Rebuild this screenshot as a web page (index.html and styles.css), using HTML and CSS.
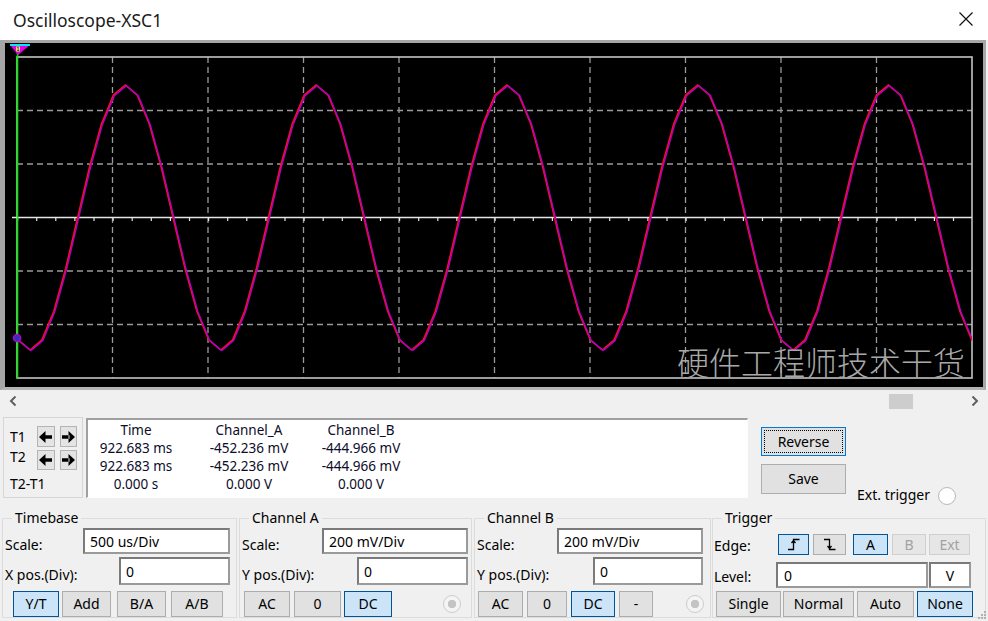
FILE: index.html
```html
<!DOCTYPE html>
<html>
<head>
<meta charset="utf-8">
<title>Oscilloscope-XSC1</title>
<link rel="stylesheet" href="styles.css">
</head>
<body>
<div class="window">
  <div class="titlebar">
    <span class="title">Oscilloscope-XSC1</span>
    <svg class="close" width="16" height="16" viewBox="0 0 16 16"><path d="M1.5 1.5L14.5 14.5M14.5 1.5L1.5 14.5" stroke="#111" stroke-width="1.2" fill="none"/></svg>
  </div>

  <div class="scope">
    <svg class="screen" width="978" height="344" viewBox="5 43 978 344">
      <defs>
        <clipPath id="clip"><rect x="17" y="50" width="955" height="330"/></clipPath>
        <path id="period" d="M0 350 L11.92 339.9 L23.84 311.2 L35.77 268.2 L47.69 217.5 L59.61 166.8 L71.53 123.8 L83.45 95.1 L95.38 85 L107.3 95.1 L119.22 123.8 L131.14 166.8 L143.06 217.5 L154.98 268.2 L166.91 311.2 L178.83 339.9 L190.75 350"/>
      </defs>
      <rect x="5" y="43" width="978" height="344" fill="#000"/>
      <g stroke="#9a9a9a" stroke-width="1.3" stroke-dasharray="6 4" fill="none">
        <path d="M112.5 57V378M208 57V378M303.5 57V378M399 57V378M494.5 57V378M590 57V378M685.5 57V378M781 57V378M876.5 57V378"/>
        <path d="M17 110.5H972M17 164H972M17 271H972M17 324.5H972"/>
      </g>
      <rect x="17" y="57" width="955" height="321" fill="none" stroke="#c4c4c4" stroke-width="1.6"/>
      <path d="M12 217.5H972" stroke="#e6e6e6" stroke-width="1.6"/>
      <path d="M17 219.5H972" stroke="#e6e6e6" stroke-width="3" stroke-dasharray="1.2 17.9"/>
      <g clip-path="url(#clip)" fill="none">
        <g stroke="#ff1010" stroke-width="1.6">
          <use href="#period" x="-160.75"/><use href="#period" x="30"/><use href="#period" x="220.75"/><use href="#period" x="411.5"/><use href="#period" x="602.25"/><use href="#period" x="793"/><use href="#period" x="983.75"/>
        </g>
        <g stroke="#b000c4" stroke-width="1.4" transform="translate(0.9 0.6)">
          <use href="#period" x="-160.75"/><use href="#period" x="30"/><use href="#period" x="220.75"/><use href="#period" x="411.5"/><use href="#period" x="602.25"/><use href="#period" x="793"/><use href="#period" x="983.75"/>
        </g>
      </g>
      <path d="M17.5 52V378" stroke="#00ee00" stroke-width="1.6"/>
      <path d="M10 45H30L18 55Z" fill="#e000e0"/>
      <path d="M10 45H30" stroke="#00e8ff" stroke-width="2"/>
      <rect x="16" y="46.5" width="4" height="5" fill="#e8e080"/>
      <text x="18" y="51.3" font-size="5.5" text-anchor="middle" fill="#000" font-family="DejaVu Sans">1</text>
      <circle cx="17" cy="338" r="3.6" fill="#3030c0" stroke="#c000c0" stroke-width="1.4"/>
    </svg>
    <div class="watermark">硬件工程师技术干货</div>
  </div>

  <div class="hscroll">
    <svg class="chev" width="10" height="12" viewBox="0 0 10 12"><path d="M7.5 1.5L3 6L7.5 10.5" stroke="#606060" stroke-width="2" fill="none"/></svg>
    <div class="track"><div class="thumb"></div></div>
    <svg class="chev" width="10" height="12" viewBox="0 0 10 12"><path d="M2.5 1.5L7 6L2.5 10.5" stroke="#606060" stroke-width="2" fill="none"/></svg>
  </div>

  <div class="mid">
    <div class="tpanel">
      <div class="trow r1">
        <span class="tlabel">T1</span>
        <button class="abtn"><svg width="13" height="12" viewBox="0 0 13 12"><path d="M0 6L6.5 0V12Z M5.5 4.3H13V7.7H5.5Z" fill="#000"/></svg></button>
        <button class="abtn"><svg width="13" height="12" viewBox="0 0 13 12"><path d="M13 6L6.5 0V12Z M0 4.3H7.5V7.7H0Z" fill="#000"/></svg></button>
      </div>
      <div class="trow r2">
        <span class="tlabel up">T2</span>
        <button class="abtn"><svg width="13" height="12" viewBox="0 0 13 12"><path d="M0 6L6.5 0V12Z M5.5 4.3H13V7.7H5.5Z" fill="#000"/></svg></button>
        <button class="abtn"><svg width="13" height="12" viewBox="0 0 13 12"><path d="M13 6L6.5 0V12Z M0 4.3H7.5V7.7H0Z" fill="#000"/></svg></button>
      </div>
      <div class="tdiff">T2-T1</div>
    </div>

    <div class="readout">
      <div class="cell">Time</div><div class="cell">Channel_A</div><div class="cell">Channel_B</div>
      <div class="cell">922.683 ms</div><div class="cell">-452.236 mV</div><div class="cell">-444.966 mV</div>
      <div class="cell">922.683 ms</div><div class="cell">-452.236 mV</div><div class="cell">-444.966 mV</div>
      <div class="cell">0.000 s</div><div class="cell">0.000 V</div><div class="cell">0.000 V</div>
    </div>

    <div class="side">
      <div class="sidebtns">
        <button class="btn reverse">Reverse</button>
        <button class="btn save">Save</button>
      </div>
      <div class="ext">
        <span>Ext. trigger</span>
        <span class="radio white"></span>
      </div>
    </div>
  </div>

  <div class="controls">
    <fieldset class="group timebase">
      <legend>Timebase</legend>
      <div class="row r-scale"><span class="lbl">Scale:</span><div class="field w147">500 us/Div</div></div>
      <div class="row r-pos"><span class="lbl">X pos.(Div):</span><div class="field w111">0</div></div>
      <div class="row r-btns">
        <button class="btn on b-yt">Y/T</button>
        <button class="btn b-add">Add</button>
        <button class="btn b-ba">B/A</button>
        <button class="btn b-ab">A/B</button>
      </div>
    </fieldset>

    <fieldset class="group cha">
      <legend>Channel A</legend>
      <div class="row r-scale"><span class="lbl">Scale:</span><div class="field w146">200 mV/Div</div></div>
      <div class="row r-pos"><span class="lbl">Y pos.(Div):</span><div class="field w111">0</div></div>
      <div class="row r-btns">
        <button class="btn a-ac">AC</button>
        <button class="btn a-0">0</button>
        <button class="btn on a-dc">DC</button>
        <span class="radio dis a-radio"></span>
      </div>
    </fieldset>

    <fieldset class="group chb">
      <legend>Channel B</legend>
      <div class="row r-scale"><span class="lbl">Scale:</span><div class="field w146">200 mV/Div</div></div>
      <div class="row r-pos"><span class="lbl">Y pos.(Div):</span><div class="field w110">0</div></div>
      <div class="row r-btns">
        <button class="btn b-ac">AC</button>
        <button class="btn b-0">0</button>
        <button class="btn on b-dc">DC</button>
        <button class="btn b-minus">-</button>
        <span class="radio dis b-radio"></span>
      </div>
    </fieldset>

    <fieldset class="group trig">
      <legend>Trigger</legend>
      <div class="row t-edge">
        <span class="tl">Edge:</span>
        <button class="btn on e-rise"><svg width="14" height="13" viewBox="0 0 14 13"><path d="M1 11.5H6.5V1.5H12.5M4.5 5L6.5 2.5L8.5 5" stroke="#000" stroke-width="1.3" fill="none"/></svg></button>
        <button class="btn e-fall"><svg width="14" height="13" viewBox="0 0 14 13"><path d="M1 1.5H6.5V11.5H12.5M4.5 8L6.5 10.5L8.5 8" stroke="#000" stroke-width="1.3" fill="none"/></svg></button>
        <button class="btn on e-a">A</button>
        <button class="btn dis e-b">B</button>
        <button class="btn dis e-ext">Ext</button>
      </div>
      <div class="row t-level">
        <span class="tl lv">Level:</span>
        <div class="field w152 lvl">0</div>
        <div class="field w42 unit">V</div>
      </div>
      <div class="row t-btns">
        <button class="btn m-single">Single</button>
        <button class="btn m-normal">Normal</button>
        <button class="btn m-auto">Auto</button>
        <button class="btn on m-none">None</button>
      </div>
    </fieldset>
  </div>

  <svg class="grip" width="10" height="10" viewBox="0 0 10 10" fill="#b0b0b0">
    <rect x="7" y="1" width="2" height="2"/><rect x="4" y="4" width="2" height="2"/><rect x="7" y="4" width="2" height="2"/>
    <rect x="1" y="7" width="2" height="2"/><rect x="4" y="7" width="2" height="2"/><rect x="7" y="7" width="2" height="2"/>
  </svg>
</div>
</body>
</html>
```

FILE: styles.css
```css
* { box-sizing: border-box; }
html, body { margin: 0; padding: 0; }
body {
  width: 988px;
  height: 621px;
  overflow: hidden;
  background: #f0f0f0;
  font-family: "Noto Sans", "Open Sans", sans-serif;
  font-size: 14px;
  color: #000;
}
.window { position: relative; width: 988px; height: 621px; }

.titlebar {
  height: 40px;
  background: #fff;
  display: flex;
  align-items: center;
  justify-content: space-between;
  padding: 0 14px 0 13px;
}
.title { font-size: 17.5px; color: #1a1a1a; line-height: 20px; margin-top: -1px; }
.close { display: block; margin-top: -2px; }

.scope {
  position: relative;
  width: 986px;
  height: 350px;
  border-top: 3px solid #a6a6a6;
  border-left: 5px solid #a6a6a6;
  border-right: 3px solid #a6a6a6;
  border-bottom: 3px solid #b4b4b4;
  background: #000;
}
.screen { display: block; }
.watermark {
  position: absolute;
  left: 672px;
  top: 301px;
  font-family: "Noto Sans CJK SC", sans-serif;
  font-size: 32px;
  line-height: 34px;
  color: #a8a8a8;
  font-weight: 300;
  white-space: nowrap;
}

.hscroll {
  height: 22px;
  display: flex;
  align-items: center;
  padding: 0 8px 0 8px;
}
.chev { display: block; flex: none; }
.track { flex: 1; height: 15px; padding-left: 871px; }
.thumb { width: 24px; height: 15px; background: #cdcdcd; }

.mid {
  display: flex;
  height: 90px;
  padding-top: 5px;
}
.tpanel {
  margin-left: 3px;
  width: 80px;
  height: 81px;
  border: 1px solid #d6d6d6;
  padding-top: 8px;
}
.trow { display: flex; align-items: center; height: 21px; }
.trow.r2 { margin-top: 3px; height: 20px; }
.tlabel { width: 34px; padding-left: 6px; line-height: 18px; }
.tlabel.up { margin-bottom: 6px; }
.abtn {
  width: 18px;
  height: 100%;
  padding: 0;
  margin: 0 5px 0 0;
  border: 1px solid #b4b4b4;
  background: #e4e4e4;
  display: flex;
  align-items: center;
  justify-content: center;
}
.abtn svg { display: block; }
.tdiff { padding-left: 6px; line-height: 18px; margin-top: 5px; }

.readout {
  margin-left: 3px;
  margin-top: 1px;
  width: 662px;
  height: 80px;
  background: #fff;
  border-top: 2px solid #a0a0a0;
  border-left: 2px solid #a0a0a0;
  border-right: 1px solid #fdfdfd;
  border-bottom: 1px solid #fdfdfd;
  padding-top: 1px;
  display: grid;
  grid-template-columns: 96px 130px 94px;
  grid-auto-rows: 18px;
  align-content: start;
  color: #0c0c2a;
  font-size: 13.5px;
}
.cell { text-align: center; line-height: 18px; white-space: nowrap; }

.side { display: flex; margin-left: 13px; }
.sidebtns { display: flex; flex-direction: column; width: 85px; }
.btn {
  font-family: inherit;
  font-size: 14px;
  color: #000;
  background: #e1e1e1;
  border: 1px solid #adadad;
  padding: 0;
  margin: 0;
  line-height: 18px;
  display: flex;
  align-items: center;
  justify-content: center;
  flex: none;
}
.btn.on { background: #cce4f7; border-color: #005499; }
.btn.dis { background: #e6e6e6; border-color: #cfcfcf; color: #a2a2a2; }
.reverse {
  width: 85px; height: 29px; margin-top: 10px;
  border-color: #0078d7;
  outline: 1px dotted #000;
  outline-offset: -4px;
}
.save { width: 85px; height: 30px; margin-top: 8px; }
.ext {
  display: flex;
  align-items: center;
  margin-left: 11px;
  margin-top: 67px;
  height: 20px;
}
.radio {
  display: inline-block;
  width: 18px;
  height: 18px;
  border-radius: 50%;
  flex: none;
}
.radio.white { background: #fff; border: 1px solid #b8b8b8; margin-left: 8px; margin-top: 4px; }
.radio.dis {
  background: radial-gradient(circle, #c4c4c4 0 4px, #f4f4f4 4.5px);
  border: 1px solid #cccccc;
}

.controls { display: flex; padding-top: 7px; }
.group {
  margin: 0 0 0 2px;
  padding: 0;
  border: 1px solid #dcdcdc;
  min-width: 0;
}
.group legend {
  padding: 0 3px;
  margin-left: 9px;
  line-height: 18px;
  height: 18px;
  font-size: 14px;
}
.timebase { width: 235px; }
.cha { width: 233px; }
.chb { width: 237px; }
.trig { width: 274px; margin-left: 1px; }

.row { display: flex; align-items: center; }
.r-scale { height: 26px; margin-top: 1px; }
.r-pos { height: 28px; margin-top: 3px; }
.r-btns { height: 26px; margin-top: 6px; }
.lbl { padding-left: 2px; margin-top: 6px; margin-right: auto; white-space: nowrap; }
.field {
  height: 100%;
  background: #fff;
  border: 2px solid #8a8a8a;
  border-color: #7a7a7a #9a9a9a #9a9a9a #7a7a7a;
  padding-left: 5px;
  display: flex;
  align-items: center;
  flex: none;
  white-space: nowrap;
}
.w147 { width: 147px; }
.w146 { width: 146px; }
.w111 { width: 111px; }
.w110 { width: 110px; }
.w152 { width: 152px; }
.w42 { width: 42px; }

.timebase .field { margin-right: 6px; }
.cha .field { margin-right: 3px; }
.chb .field { margin-right: 7px; }

.r-btns .btn { height: 26px; }
.b-yt { width: 46px; margin-left: 10px !important; }
.b-add { width: 49px; margin-left: 3px !important; }
.b-ba { width: 49px; margin-left: 6px !important; }
.b-ab { width: 52px; margin-left: 5px !important; }

.a-ac { width: 46px; margin-left: 4px !important; }
.a-0 { width: 47px; margin-left: 4px !important; }
.a-dc { width: 48px; margin-left: 3px !important; }
.a-radio { margin-left: 51px; }

.b-ac { width: 45px; margin-left: 3px !important; }
.b-0 { width: 40px; margin-left: 4px !important; }
.b-dc { width: 44px; margin-left: 4px !important; }
.b-minus { width: 34px; margin-left: 4px !important; }
.b-radio { margin-left: 33px; }

.t-edge { height: 21px; margin-top: 7px; padding-left: 1px; }
.tl { width: 64px; flex: none; margin-top: 2px; }
.tl.lv { width: 62px; }
.t-edge .btn { height: 21px; }
.e-rise { width: 31px; }
.e-fall { width: 33px; margin-left: 4px !important; }
.e-a { width: 35px; margin-left: 7px !important; }
.e-b { width: 34px; margin-left: 4px !important; }
.e-ext { width: 41px; margin-left: 3px !important; }
.btn svg { display: block; }

.t-level { height: 26px; margin-top: 7px; padding-left: 1px; }
.lvl { padding-left: 6px; }
.unit { margin-left: 1px; justify-content: center; padding-left: 0; }

.t-btns { height: 26px; margin-top: 3px; }
.t-btns .btn { height: 26px; }
.m-single { width: 65px; margin-left: 3px !important; }
.m-normal { width: 71px; margin-left: 2px !important; }
.m-auto { width: 57px; margin-left: 3px !important; }
.m-none { width: 56px; margin-left: 3px !important; }

.grip { position: absolute; right: 1px; bottom: 1px; display: block; }
```
